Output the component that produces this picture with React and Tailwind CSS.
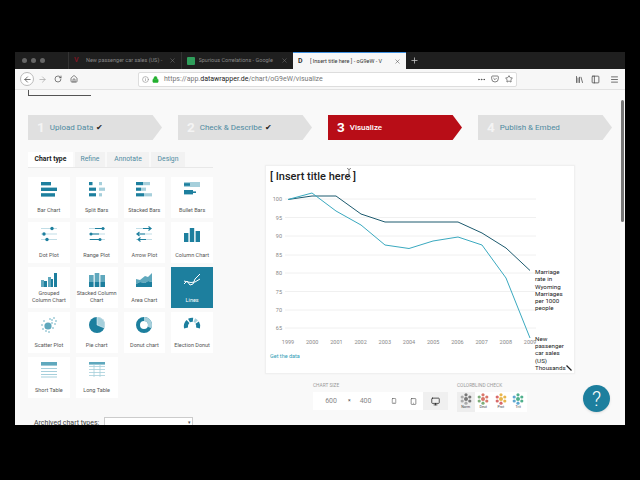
import { ArrowLeft, ArrowRight, RotateCw, Home, Info, Lock, MoreHorizontal, Pocket, Star, Library, PanelLeft, Menu, X, Plus, Smartphone, Tablet, Monitor } from "lucide-react";

const TEAL = "#1d7f9e";
const MID = "#5fa8bd";
const PALE = "#a6cfdb";

/* small chart type pictures, all on a 20x20 box */
const icons = {
  bar: (
    <>
      <rect x="2" y="2" width="10" height="3.4" fill={TEAL} />
      <rect x="2" y="7.6" width="16" height="3.4" fill={TEAL} />
      <rect x="2" y="13.2" width="14" height="3.4" fill={TEAL} />
    </>
  ),
  split: (
    <>
      <rect x="2" y="2" width="3.5" height="3.2" fill={TEAL} />
      <rect x="2" y="7.6" width="7" height="3.2" fill={TEAL} />
      <rect x="2" y="13.2" width="7" height="3.2" fill={TEAL} />
      <rect x="12" y="2" width="3" height="3.2" fill={PALE} />
      <rect x="12" y="7.6" width="6" height="3.2" fill={PALE} />
      <rect x="12" y="13.2" width="3" height="3.2" fill={PALE} />
    </>
  ),
  stacked: (
    <>
      <rect x="2" y="2" width="7" height="3.2" fill={TEAL} />
      <rect x="9" y="2" width="7" height="3.2" fill={PALE} />
      <rect x="2" y="7.6" width="5" height="3.2" fill={TEAL} />
      <rect x="7" y="7.6" width="5" height="3.2" fill={PALE} />
      <rect x="2" y="13.2" width="8" height="3.2" fill={TEAL} />
      <rect x="10" y="13.2" width="8" height="3.2" fill={PALE} />
    </>
  ),
  bullet: (
    <>
      <rect x="2" y="2" width="16" height="5" fill={PALE} />
      <rect x="2" y="3.2" width="6" height="2.6" fill={TEAL} />
      <rect x="2" y="10" width="9" height="4.4" fill={TEAL} />
      <rect x="11" y="11.4" width="3" height="1.6" fill={TEAL} />
    </>
  ),
  dot: (
    <>
      <path d="M2 3.5H18M2 9H18M2 14.5H18" stroke={PALE} strokeWidth="0.7" />
      <circle cx="13" cy="3.5" r="1.7" fill={TEAL} />
      <circle cx="5" cy="9" r="1.7" fill={TEAL} />
      <circle cx="8" cy="14.5" r="1.7" fill={TEAL} />
    </>
  ),
  range: (
    <>
      <path d="M2 3.5H18M2 9H18M2 14.5H18" stroke={PALE} strokeWidth="0.7" />
      <path d="M8 3.5H16M5 9H12M3 14.5H13" stroke={TEAL} strokeWidth="1.2" />
      <circle cx="16" cy="3.5" r="1.5" fill={TEAL} />
      <circle cx="4" cy="9" r="1.5" fill={TEAL} />
      <circle cx="13" cy="14.5" r="1.5" fill={TEAL} />
    </>
  ),
  arrow: (
    <>
      <path d="M2 3.5H18M2 9H18M2 14.5H18" stroke={PALE} strokeWidth="0.7" />
      <path d="M9 3.5H17M14.5 1.5L17 3.5L14.5 5.5M3 9H11M5.5 7L3 9L5.5 11M4 14.5H12M6.5 12.5L4 14.5L6.5 16.5" stroke={TEAL} strokeWidth="1.1" fill="none" />
    </>
  ),
  column: (
    <>
      <rect x="2" y="8" width="4.4" height="9" fill={TEAL} />
      <rect x="7.8" y="3" width="4.4" height="14" fill={TEAL} />
      <rect x="13.6" y="6" width="4.4" height="11" fill={TEAL} />
    </>
  ),
  grouped: (
    <>
      <rect x="2" y="10" width="3" height="7" fill={MID} />
      <rect x="5" y="11" width="3" height="6" fill={TEAL} />
      <rect x="9" y="7" width="3" height="10" fill={MID} />
      <rect x="12" y="9" width="2" height="8" fill={TEAL} />
      <rect x="15" y="3" width="3" height="14" fill={TEAL} />
    </>
  ),
  stackedCol: (
    <>
      <rect x="2" y="5" width="4.6" height="7" fill={MID} />
      <rect x="2" y="12" width="4.6" height="5" fill={TEAL} />
      <rect x="7.7" y="3" width="4.6" height="9" fill={MID} />
      <rect x="7.7" y="12" width="4.6" height="5" fill={TEAL} />
      <rect x="13.4" y="5" width="4.6" height="7" fill={MID} />
      <rect x="13.4" y="12" width="4.6" height="5" fill={TEAL} />
    </>
  ),
  area: (
    <>
      <path d="M2 9L6 10L11 6L14 7L18 3V12L14 11L11 13L6 12L2 14Z" fill={MID} />
      <path d="M2 14L6 12L11 13L14 11L18 12V17H2Z" fill={TEAL} />
    </>
  ),
  lines: (
    <path d="M2 14L5 11L8 15L11 14L13 9L18 4M2 11L6 12L9 12.5L13 12L18 9" stroke="#fff" strokeWidth="1" fill="none" />
  ),
  scatter: (
    <>
      <circle cx="9" cy="11" r="3.6" fill={MID} />
      {[[15, 3], [17, 6], [13, 5], [16, 9], [11, 4], [5, 6], [3, 10], [4, 14], [7, 16], [13, 8], [14, 13], [10, 17]].map(([x, y]) => (
        <circle key={`${x}-${y}`} cx={x} cy={y} r="0.8" fill={MID} />
      ))}
    </>
  ),
  pie: (
    <>
      <circle cx="10" cy="10" r="8" fill={TEAL} />
      <path d="M10 10V2A8 8 0 0 1 17.5 13Z" fill={PALE} stroke="#fff" strokeWidth="0.5" />
    </>
  ),
  donut: (
    <>
      <circle cx="10" cy="10" r="6" fill="none" stroke={TEAL} strokeWidth="4" />
      <path d="M10 4A6 6 0 0 1 15.5 12.5" fill="none" stroke={PALE} strokeWidth="4" />
    </>
  ),
  election: (
    <>
      <path d="M4 13A7 7 0 0 1 6 6.5" fill="none" stroke={TEAL} strokeWidth="4" />
      <path d="M7 5.5A7 7 0 0 1 11 4.7" fill="none" stroke={TEAL} strokeWidth="4" />
      <path d="M12.3 5A7 7 0 0 1 14.5 6.6" fill="none" stroke={PALE} strokeWidth="4" />
      <path d="M15.2 7.6A7 7 0 0 1 16 13" fill="none" stroke={TEAL} strokeWidth="4" />
    </>
  ),
  shortTable: (
    <>
      <rect x="2" y="2" width="16" height="3.6" fill={MID} />
      <path d="M2 8.5H18M2 11.5H18M2 14.5H18M2 17H18" stroke={PALE} strokeWidth="1" />
    </>
  ),
  longTable: (
    <>
      <rect x="2" y="2" width="16" height="2.6" fill={MID} />
      <path d="M2 6.5H18M2 9.5H18M2 12.5H18M2 15.5H18M7 5V17M13 5V17" stroke={PALE} strokeWidth="0.8" />
    </>
  ),
};

const chartTypes = [
  ["Bar Chart", "bar"], ["Split Bars", "split"], ["Stacked Bars", "stacked"], ["Bullet Bars", "bullet"],
  ["Dot Plot", "dot"], ["Range Plot", "range"], ["Arrow Plot", "arrow"], ["Column Chart", "column"],
  ["Grouped Column Chart", "grouped"], ["Stacked Column Chart", "stackedCol"], ["Area Chart", "area"], ["Lines", "lines"],
  ["Scatter Plot", "scatter"], ["Pie chart", "pie"], ["Donut chart", "donut"], ["Election Donut", "election"],
  ["Short Table", "shortTable"], ["Long Table", "longTable"],
];

const steps = [
  ["1", "Upload Data", true],
  ["2", "Check & Describe", true],
  ["3", "Visualize", false],
  ["4", "Publish & Embed", false],
];

const years = [1999, 2000, 2001, 2002, 2003, 2004, 2005, 2006, 2007, 2008, 2009];
const ticks = [[100, 199], [95, 217.5], [90, 236], [85, 255], [80, 273], [75, 291.5], [70, 310], [65, 328]];
const darkLine = "288,199.5 312,196 336,196 361,214 385,222 409,222 433,222 458,222 482,233 506,248 530,270.5";
const lightLine = "288,199.5 312,193 336,211 361,225 385,245 409,248.5 433,241 458,237 482,245 506,278 530,338";

function Tab({ title, active, icon }) {
  return (
    <div className={`flex h-full w-[112.5px] items-center px-[5px] ${active ? "bg-[#f7f7f7] border-t border-[#3d8fe0] text-[#333]" : "border-l border-[#333] text-[#888]"}`}>
      <span className="flex w-[12px] shrink-0 items-center">{icon}</span>
      <span className="flex-1 truncate text-[5.5px]">{title}</span>
      <X size={7} strokeWidth={1.5} className="ml-[3px] shrink-0" />
    </div>
  );
}

function Step({ num, label, done }) {
  const active = num === "3";
  return (
    <div className={`flex h-[25px] w-[134px] items-center pl-[9px] [clip-path:polygon(0_0,93%_0,100%_50%,93%_100%,0_100%)] ${active ? "bg-[#b80d17] text-white" : "bg-[#e0e0e0] text-[#4f8ba1]"}`}>
      <span className={`mr-[5px] text-[13.5px] font-bold ${active ? "text-white" : "text-[#f4f4f4]"}`}>{num}</span>
      <span className={`text-[8px] ${active ? "font-medium" : ""}`}>{label}</span>
      {done && <span className="ml-[3px] text-[7.5px] text-[#222]">✔</span>}
    </div>
  );
}

function ChartCard({ label, kind }) {
  const on = kind === "lines";
  return (
    <div className={`flex h-[41px] flex-col items-center justify-between pb-[4px] pt-[3px] ${on ? "bg-[#1d7f9e] text-white" : "bg-white text-[#555]"}`}>
      <svg viewBox="0 0 20 20" className="h-[20px] w-[20px] shrink-0">{icons[kind]}</svg>
      <div className="w-[41px] text-center text-[5.5px] leading-[7px]">{label}</div>
    </div>
  );
}

function LineChart() {
  return (
    <svg viewBox="265 190 270 155" className="h-[155px] w-[270px] overflow-visible">
      {ticks.map(([v, y]) => (
        <g key={v}>
          <line x1="285" x2="536" y1={y} y2={y} stroke="#f0f0f0" strokeWidth="1" />
          <text x="282" y={y + 2} textAnchor="end" fontSize="5.5" fill="#888">{v}</text>
        </g>
      ))}
      {years.map((yr, i) => (
        <text key={yr} x={288 + i * 24.2} y="344" textAnchor="middle" fontSize="5.5" fill="#888">{yr}</text>
      ))}
      <polyline points={darkLine} fill="none" stroke="#1c5a6e" strokeWidth="1" />
      <polyline points={lightLine} fill="none" stroke="#3aa9bf" strokeWidth="1" />
    </svg>
  );
}

function Dots({ color, alt }) {
  return (
    <svg viewBox="0 0 12 12" className="h-[12px] w-[12px]">
      {[[6, 1.8], [2.2, 4], [9.8, 4], [2.2, 8], [9.8, 8], [6, 10.2]].map(([x, y], i) => (
        <circle key={`${x}-${y}`} cx={x} cy={y} r="1.6" fill={i % 2 ? alt : color} />
      ))}
      <circle cx="6" cy="6" r="2" fill={color} />
    </svg>
  );
}

export default function App() {
  return (
    <div className="flex h-[480px] w-[640px] flex-col overflow-hidden bg-black px-[15px] pt-[52px] pb-[55px] font-['Roboto',sans-serif]">
      {/* tab strip */}
      <div className="flex h-[17px] shrink-0 items-center bg-[#1f1f1f]">
        <div className="flex w-[53px] gap-[4px] pl-[7px]">
          <span className="h-[5px] w-[5px] rounded-full bg-[#666]" />
          <span className="h-[5px] w-[5px] rounded-full bg-[#666]" />
          <span className="h-[5px] w-[5px] rounded-full bg-[#666]" />
        </div>
        <Tab title="New passenger car sales (US) -" icon={<span className="text-[7px] font-bold text-[#7a1522]">V</span>} />
        <Tab title="Spurious Correlations - Google" icon={<span className="h-[8px] w-[8px] rounded-[1px] bg-[#2f9e5b]" />} />
        <Tab active title="[ Insert title here ] - oG9eW - V" icon={<span className="text-[7px] font-bold text-[#333]">D</span>} />
        <Plus size={9} className="ml-[4px] text-[#ccc]" />
      </div>

      {/* url bar */}
      <div className="flex h-[21px] shrink-0 items-center border-b border-[#e2e2e2] bg-[#f7f7f7] text-[#444]">
        <div className="ml-[5px] flex h-[14px] w-[14px] items-center justify-center rounded-full border border-[#bbb] bg-white">
          <ArrowLeft size={9} />
        </div>
        <ArrowRight size={9} className="ml-[4px] text-[#aaa]" />
        <RotateCw size={8} className="ml-[7px]" />
        <Home size={8} className="ml-[8px]" />
        <div className="ml-[60px] flex h-[15px] w-[379px] items-center rounded-[2px] border border-[#ddd] bg-white px-[3px]">
          <Info size={7} className="text-[#888]" />
          <Lock size={7} className="ml-[3px] text-[#23b030]" fill="#23b030" />
          <span className="ml-[5px] flex-1 text-[7px] text-[#777]">
            https://app.<span className="text-[#222]">datawrapper.de</span>/chart/oG9eW/visualize
          </span>
          <MoreHorizontal size={9} />
          <Pocket size={8} className="ml-[5px]" />
          <Star size={8} className="ml-[6px]" />
        </div>
        <Library size={9} className="ml-[58px]" />
        <PanelLeft size={9} className="ml-[7px]" />
        <Menu size={9} className="ml-[10px]" />
      </div>

      {/* page */}
      <div className="relative min-h-0 flex-1 overflow-hidden bg-[#f9f9f9]">
        <div className="ml-[13px] h-[6px] w-[63px] border-b border-l border-[#555]" />

        <div className="ml-[13px] mt-[19px] flex gap-[16px]">
          {steps.map(([num, label, done]) => (
            <Step key={num} num={num} label={label} done={done} />
          ))}
        </div>

        <div className="ml-[13px] mt-[12px] flex">
          {/* left column */}
          <div className="w-[185px]">
            <div className="flex h-[16px] gap-[2px] border-b border-[#e8e8e8] text-[6.8px] text-[#4f8ba1]">
              <div className="flex w-[45px] items-center justify-center bg-white font-bold text-[#222]">Chart type</div>
              <div className="flex w-[30px] items-center justify-center bg-[#f2f2f2]">Refine</div>
              <div className="flex w-[42px] items-center justify-center bg-[#f2f2f2]">Annotate</div>
              <div className="flex w-[34px] items-center justify-center bg-[#f2f2f2]">Design</div>
            </div>
            <div className="mt-[9px] grid grid-cols-4 gap-x-[6px] gap-y-[4px]">
              {chartTypes.map(([label, kind]) => (
                <ChartCard key={label} label={label} kind={kind} />
              ))}
            </div>
            <div className="mt-[19px] flex items-center gap-[5px] pl-[6px]">
              <span className="text-[7px] text-[#444]">Archived chart types:</span>
              <div className="flex h-[12px] w-[89px] items-center justify-end border border-[#ccc] bg-white pr-[1px] text-[5px] text-[#555]">▾</div>
            </div>
          </div>

          {/* right column */}
          <div className="ml-[52px] mt-[13px]">
            <div className="flex h-[209px] w-[310px] flex-col border border-[#f0f0f0] bg-white pl-[4px] pt-[3px] shadow-[0_0_2px_rgba(0,0,0,0.04)]">
              <div className="h-[21px] text-[11px] font-medium leading-[15px] text-[#222]">[ Insert title here ]</div>
              <div className="flex">
                <div className="w-[265px] shrink-0">
                  <div className="-ml-[5px]"><LineChart /></div>
                  <div className="mt-[7px] text-[5.5px] text-[#2f9db5]">Get the data</div>
                </div>
                <div className="w-[32px] pt-[79px] text-[6.2px] leading-[7.3px] text-[#222]">
                  <div>Marriage rate in Wyoming Marriages per 1000 people</div>
                  <div className="mt-[23px]">New passenger car sales (US) Thousands</div>
                </div>
              </div>
            </div>

            <div className="mt-[8px] flex">
              <div className="ml-[48px]">
                <div className="text-[4.8px] uppercase text-[#999]">Chart size</div>
                <div className="mt-[3px] flex h-[18px] w-[135px] items-center bg-white text-[7px] text-[#888]">
                  <span className="w-[24px] text-right">600</span>
                  <span className="ml-[11px] mr-[9px] text-[5px] text-[#444]">×</span>
                  <span>400</span>
                  <Smartphone size={6} className="ml-[20px] text-[#444]" />
                  <Tablet size={7} className="ml-[13px] text-[#444]" />
                  <div className="ml-[6px] flex h-full flex-1 items-center justify-center bg-[#f0f0f0]">
                    <Monitor size={9} className="text-[#222]" />
                  </div>
                </div>
              </div>
              <div className="ml-[9px]">
                <div className="text-[4.8px] uppercase text-[#999]">Colorblind check</div>
                <div className="mt-[3px] flex h-[20px] w-[70px] bg-white text-[3.6px] text-[#444]">
                  {[["Norm", "#777", "#aaa"], ["Deut", "#d9776a", "#7fae7a"], ["Prot", "#e8b64c", "#d96a6a"], ["Trit", "#4fb08c", "#5fa8d0"]].map(([name, color, alt]) => (
                    <div key={name} className={`flex w-[17.5px] flex-col items-center pt-[1px] ${name === "Norm" ? "bg-[#eeeeee]" : ""}`}>
                      <Dots color={color} alt={alt} />
                      <span>{name}</span>
                    </div>
                  ))}
                </div>
              </div>
            </div>
          </div>
        </div>

        {/* floating help button, scrollbar and mouse marks */}
        <div className="absolute left-[568px] top-[295px] flex h-[27px] w-[27px] items-center justify-center rounded-full bg-[#1d7f9e] text-[20px] font-light text-white shadow">?</div>
        <div className="absolute left-[606px] top-[10px] h-[122px] w-[3px] rounded-full bg-[#777]" />
        <svg viewBox="0 0 6 10" className="absolute left-[331px] top-[78px] h-[10px] w-[6px]">
          <path d="M1 0.5C2 0.5 3 1 3 2V8C3 9 2 9.5 1 9.5M5 0.5C4 0.5 3 1 3 2M3 8C3 9 4 9.5 5 9.5" stroke="#333" strokeWidth="0.6" fill="none" />
        </svg>
        <svg viewBox="0 0 6 6" className="absolute left-[551px] top-[275px] h-[6px] w-[6px]">
          <path d="M0.5 0.5L5.5 5.5" stroke="#222" strokeWidth="1.2" />
        </svg>
      </div>
    </div>
  );
}
